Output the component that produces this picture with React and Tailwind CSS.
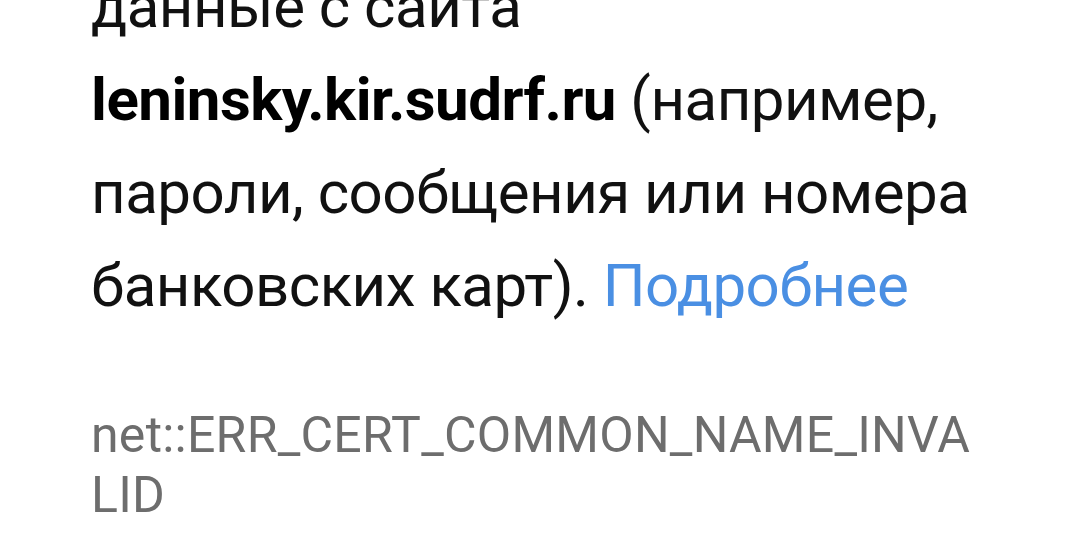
export default function App() {
  return (
    <div className="w-[1080px] h-[540px] overflow-hidden bg-white font-['Roboto',sans-serif]">
      <div className="pl-[91px]">
        <p className="mt-[-40px] text-[60px] leading-[93px] tracking-[-0.5px] text-[#111111] whitespace-nowrap">
          данные с сайта
          <br />
          <strong className="font-bold text-black">leninsky.kir.sudrf.ru</strong> (например,
          <br />
          пароли, сообщения или номера
          <br />
          банковских карт). <a className="text-[#4a8fe3]">Подробнее</a>
        </p>
        <div className="mt-[73px] text-[50px] leading-[60px] tracking-[0.25px] text-[#6d6d6d] whitespace-nowrap">
          net::ERR_CERT_COMMON_NAME_INVA
          <br />
          LID
        </div>
      </div>
    </div>
  );
}
